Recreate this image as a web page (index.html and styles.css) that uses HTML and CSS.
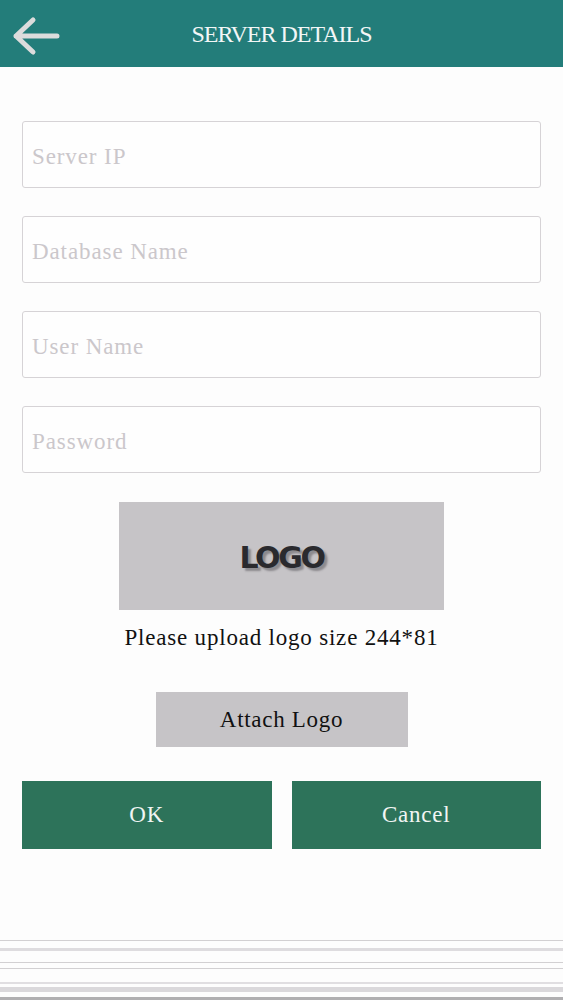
FILE: index.html
```html
<!DOCTYPE html>
<html lang="en">
<head>
  <meta charset="UTF-8">
  <title>Server Details</title>
  <meta name="viewport" content="width=device-width, initial-scale=1.0">
  <link rel="stylesheet" href="styles.css">
</head>
<body>
  <header class="topbar">
    <button class="back-btn" aria-label="Back">
      <svg width="50" height="44" viewBox="0 0 50 44">
        <path d="M4 21 H45 M21 5 L4 21 L21 37" fill="none" stroke="#dcdcdc" stroke-width="5" stroke-linecap="round" stroke-linejoin="round"/>
      </svg>
    </button>
    <h1 class="title">SERVER DETAILS</h1>
  </header>

  <main class="form">
    <input class="field" type="text" placeholder="Server IP">
    <input class="field" type="text" placeholder="Database Name">
    <input class="field" type="text" placeholder="User Name">
    <input class="field" type="password" placeholder="Password">

    <div class="logo-box">
      <span class="logo-text">LOGO</span>
    </div>
    <p class="hint">Please upload logo size 244*81</p>

    <button class="attach-btn">Attach Logo</button>

    <div class="actions">
      <button class="action-btn">OK</button>
      <button class="action-btn">Cancel</button>
    </div>
  </main>

  <footer class="bottom-lines">
    <div class="line l1"></div>
    <div class="line l2"></div>
    <div class="line l3"></div>
    <div class="line l4"></div>
    <div class="line l5"></div>
    <div class="line l6"></div>
    <div class="line l7"></div>
  </footer>
</body>
</html>
```

FILE: styles.css
```css
* {
  box-sizing: border-box;
}

body {
  margin: 0;
  padding: 0;
  background: #fdfdfd;
  font-family: 'Liberation Serif', 'DejaVu Serif', serif;
  width: 563px;
  height: 1000px;
  overflow: hidden;
  position: relative;
}

.topbar {
  height: 67px;
  background: #237d7a;
  display: flex;
  align-items: center;
  position: relative;
}

.back-btn {
  position: absolute;
  left: 12px;
  top: 15px;
  background: none;
  border: none;
  padding: 0;
  display: flex;
}

.title {
  flex: 1;
  margin: 0;
  text-align: center;
  color: #f2f6f6;
  font-weight: normal;
  font-size: 24px;
  letter-spacing: -1px;
  padding-top: 2px;
}

.form {
  padding: 54px 22px 0;
  display: flex;
  flex-direction: column;
  align-items: center;
}

.field {
  width: 519px;
  height: 67px;
  margin-bottom: 28px;
  border: 1px solid #d6d3d6;
  border-radius: 3px;
  background: #fefefe;
  padding: 4px 9px 0;
  font-family: inherit;
  font-size: 23px;
  letter-spacing: 0.9px;
  color: #333;
  outline: none;
}

.field::placeholder {
  color: #cbc7cb;
}

.field:last-of-type {
  margin-bottom: 29px;
}

.logo-box {
  width: 325px;
  height: 108px;
  background: #c6c4c7;
  display: flex;
  justify-content: center;
  align-items: center;
}

.logo-text {
  font-family: 'DejaVu Sans', sans-serif;
  font-weight: bold;
  font-size: 30px;
  letter-spacing: -2.4px;
  color: #2a2a2e;
  text-shadow: 3px 3px 2px #8c8a8e;
  padding-top: 2px;
}

.hint {
  margin: 15px 0 0;
  font-size: 23px;
  letter-spacing: 0.8px;
  color: #111;
}

.attach-btn {
  margin-top: 41px;
  width: 252px;
  height: 55px;
  background: #c6c4c7;
  border: none;
  font-family: inherit;
  font-size: 23px;
  letter-spacing: 0.7px;
  color: #111;
  padding: 0;
}

.actions {
  margin-top: 34px;
  width: 519px;
  display: flex;
  gap: 20px;
}

.action-btn {
  flex: 1;
  height: 68px;
  background: #2d735a;
  border: none;
  color: #f1f5f3;
  font-family: inherit;
  font-size: 23px;
  letter-spacing: 0.8px;
  padding: 0;
}

.bottom-lines {
  position: absolute;
  left: 0;
  right: 0;
  top: 940px;
  height: 60px;
}

.line {
  position: absolute;
  left: 0;
  right: 0;
  height: 1px;
  background: #d2d0d2;
}

.l1 { top: 0; }
.l2 { top: 8px; height: 3px; background: #dedcdf; }
.l3 { top: 22px; }
.l4 { top: 28px; }
.l5 { top: 42px; height: 2px; background: #e0dee1; }
.l6 { top: 47px; height: 5px; background: #dad8db; }
.l7 { top: 57px; height: 3px; background: #b0afb1; }
```
